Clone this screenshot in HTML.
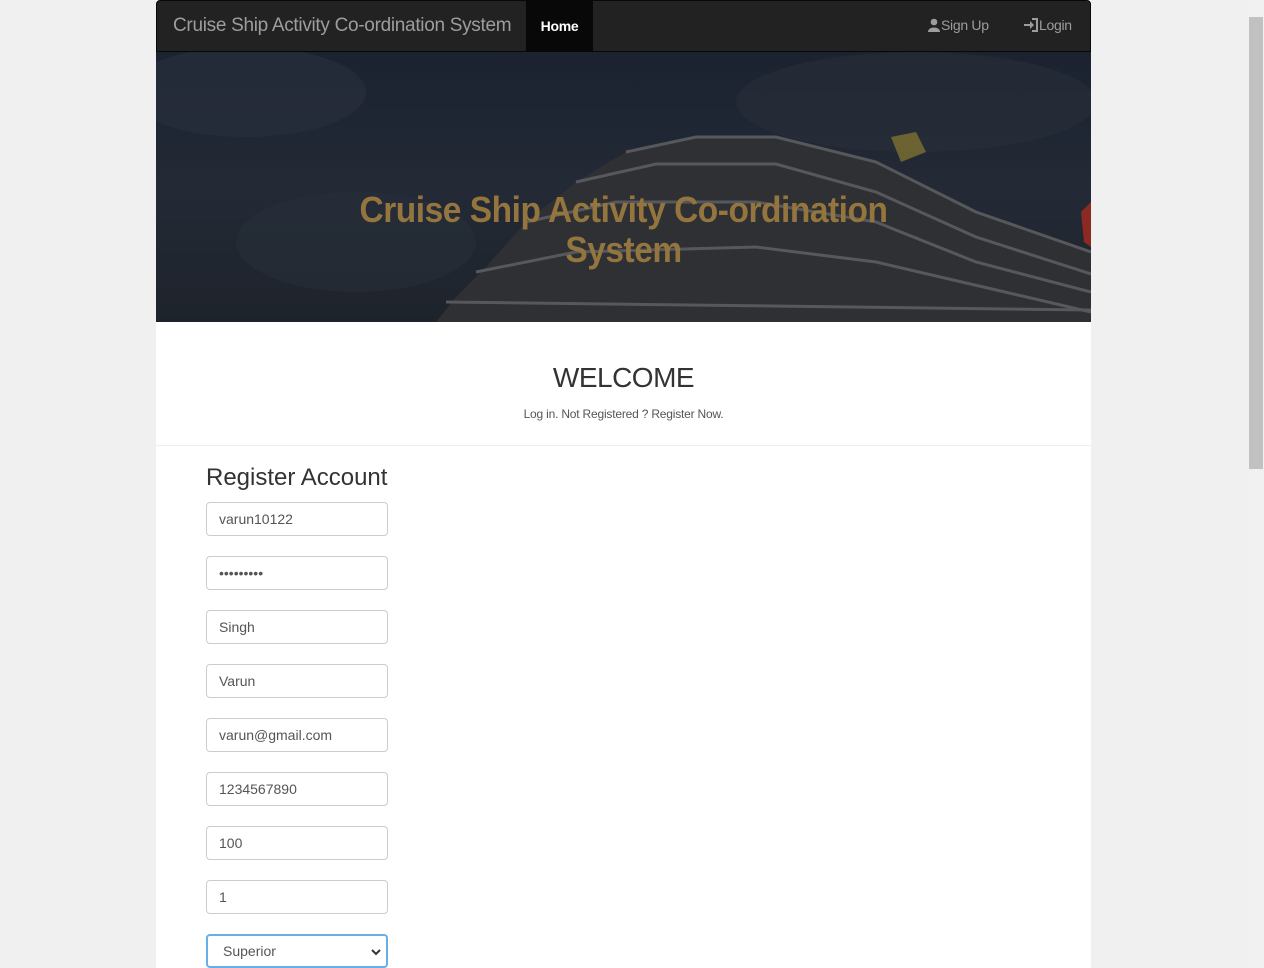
<!DOCTYPE html>
<html><head><style>
*{box-sizing:border-box}
body{margin:0;background:#f0f0f0;font-family:"Liberation Sans",sans-serif;width:1264px;height:968px;overflow:hidden;position:relative}
.wrap{position:absolute;left:156px;top:0;width:935px;height:968px;background:#fff}
.nav{position:absolute;left:0;top:0;width:935px;height:52px;background:#222;border:1px solid #080808;border-radius:4px 4px 0 0}
.brand{position:absolute;left:16px;top:14px;color:#9d9d9d;font-size:19px;letter-spacing:-0.3px}
.home{position:absolute;left:369px;top:0;width:67px;height:51px;background:#080808;color:#fff;font-size:14px;font-weight:bold;text-align:center;line-height:50px;letter-spacing:-0.3px}
.nr{position:absolute;top:16px;color:#9d9d9d;font-size:14px;letter-spacing:-0.3px}
.hero{position:absolute;left:0;top:52px;width:935px;height:270px;background:linear-gradient(180deg,#1b2230 0%,#232a36 50%,#1e232b 100%);overflow:hidden}
.hero h1{position:absolute;left:0;width:935px;top:138px;margin:0;text-align:center;color:#94753e;font-size:36px;line-height:40px;font-weight:bold;transform:scaleX(0.93);letter-spacing:-0.5px}
.welcome{position:absolute;top:362px;width:935px;text-align:center;font-size:28px;color:#333;letter-spacing:-0.5px}
.sub{position:absolute;top:407px;width:935px;text-align:center;font-size:12px;color:#555;letter-spacing:-0.2px}
.hr{position:absolute;top:445px;left:0;width:935px;border-top:1px solid #eee}
.reg{position:absolute;left:50px;top:464px;font-size:24px;color:#333}
.in{position:absolute;left:50px;width:182px;height:34px;border:1px solid #ccc;border-radius:4px;font-size:14px;color:#555;padding:8px 12px}
.sb{position:absolute;right:0;top:0;width:16px;height:968px;background:#f1f1f1}
.th{position:absolute;left:1249px;top:17px;width:14px;height:452px;background:#c1c1c1}
</style></head><body>
<div class="wrap">
<div class="hero">
<svg width="935" height="270" style="position:absolute;left:0;top:0">
<ellipse cx="90" cy="40" rx="120" ry="45" fill="#2a313d" opacity=".6"/>
<ellipse cx="760" cy="50" rx="180" ry="50" fill="#29303a" opacity=".5"/>
<ellipse cx="200" cy="190" rx="120" ry="50" fill="#283039" opacity=".5"/>
<polygon points="280,270 300,245 330,215 370,170 420,130 470,100 540,85 620,85 720,110 820,160 935,200 935,270" fill="#2e3034"/>
<g stroke="#56585c" stroke-width="3" fill="none">
<path d="M470,100 L540,85 L620,85 L720,110 L820,160 L935,200"/>
<path d="M420,130 L500,112 L620,112 L720,140 L820,185 L935,222"/>
<path d="M370,170 L460,150 L600,150 L720,170 L820,210 L935,240"/>
<path d="M320,220 L420,200 L600,195 L720,210 L935,260"/>
<path d="M290,250 L935,258"/>
</g>
<polygon points="925,160 935,150 935,195 928,190" fill="#8a2a22"/>
<polygon points="735,85 760,80 770,100 745,110" fill="#8a7a30" opacity=".7"/>
</svg>
<h1>Cruise Ship Activity Co-ordination<br>System</h1>
</div>
<div class="nav">
<div class="brand">Cruise Ship Activity Co-ordination System</div>
<div class="home">Home</div>
<div class="nr" style="left:770px"><svg width="14" height="14" viewBox="0 0 14 14" style="vertical-align:-2px"><circle cx="7" cy="4" r="3.3" fill="#9d9d9d"/><path d="M1,14 C1,8 13,8 13,14Z" fill="#9d9d9d"/></svg>Sign Up</div>
<div class="nr" style="left:866px"><svg width="16" height="14" viewBox="0 0 16 14" style="vertical-align:-2px"><path d="M1,6 h6 v-3 l4,4 -4,4 v-3 h-6z" fill="#9d9d9d"/><path d="M9,1 h5 v12 h-5" stroke="#9d9d9d" stroke-width="2" fill="none"/></svg>Login</div>
</div>
<div class="welcome">WELCOME</div>
<div class="sub">Log in. Not Registered ? Register Now.</div>
<div class="hr"></div>
<div class="reg">Register Account</div>
<div class="in" style="top:502px">varun10122</div>
<div class="in" style="top:556px">•••••••••</div>
<div class="in" style="top:610px">Singh</div>
<div class="in" style="top:664px">Varun</div>
<div class="in" style="top:718px">varun@gmail.com</div>
<div class="in" style="top:772px">1234567890</div>
<div class="in" style="top:826px">100</div>
<div class="in" style="top:880px">1</div>
<div class="in" style="top:934px;border:2px solid #66afe9;padding:7px 15px">Superior<svg width="10" height="8" viewBox="0 0 10 8" style="position:absolute;right:5px;top:12px"><path d="M1,2 L5,6 L9,2" stroke="#333" stroke-width="2" fill="none"/></svg></div>
</div>
<div class="sb"></div><div class="th"></div>
</body></html>
